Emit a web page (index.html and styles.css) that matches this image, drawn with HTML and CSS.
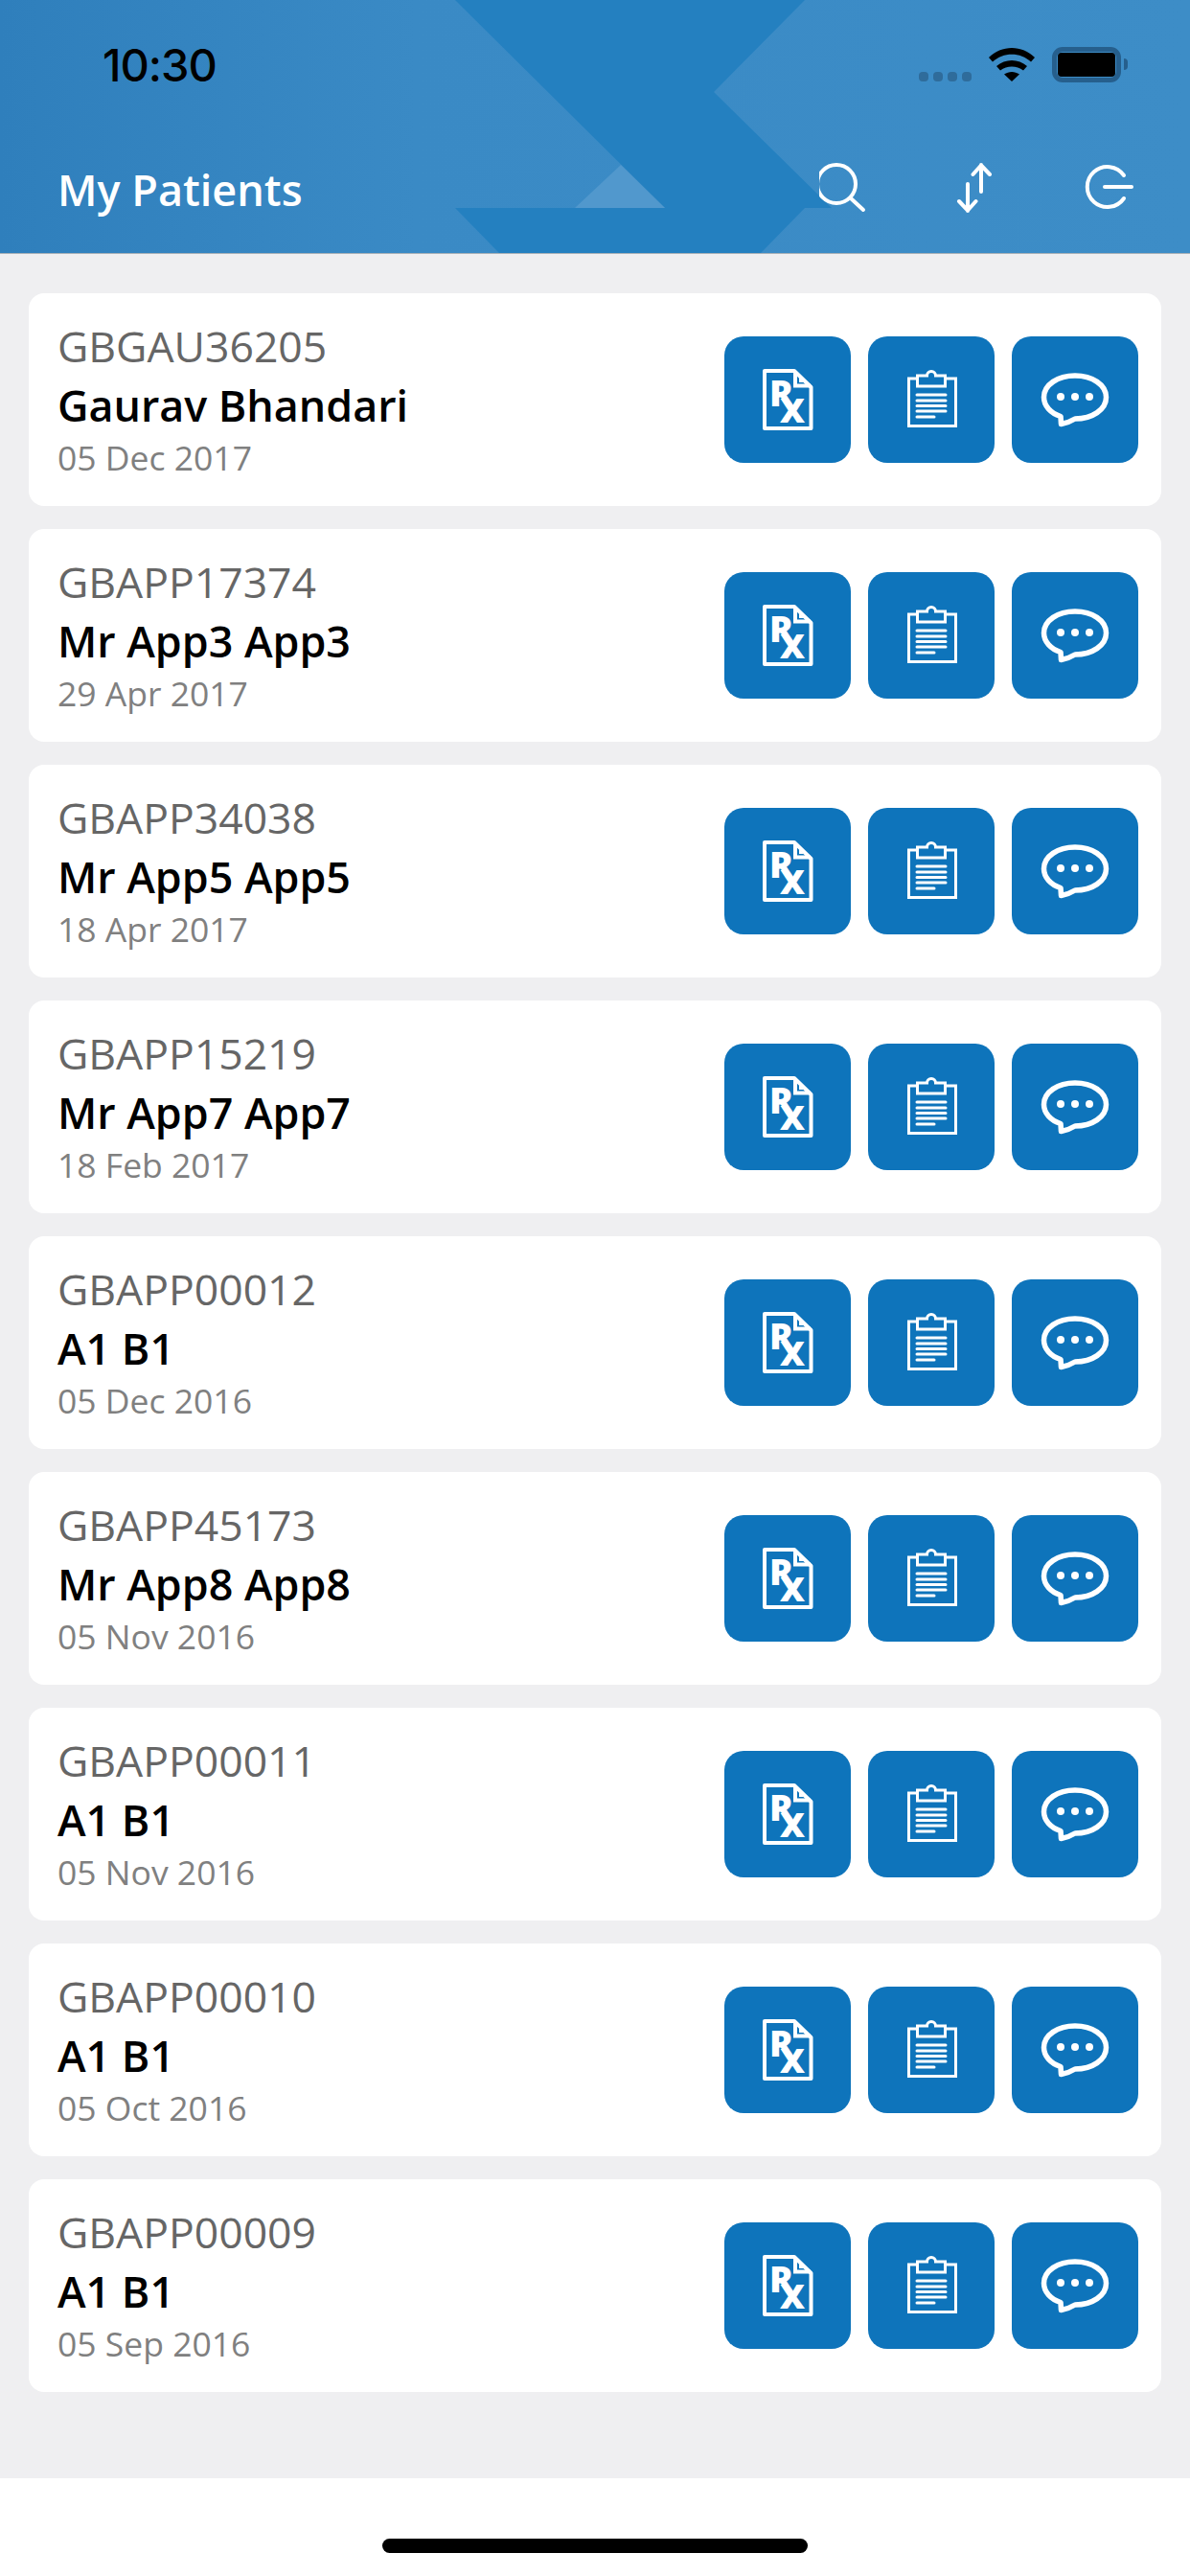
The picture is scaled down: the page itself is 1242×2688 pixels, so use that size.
FILE: index.html
```html
<!DOCTYPE html>
<html lang="en">
<head>
    <meta charset="UTF-8">
    <meta name="viewport" content="width=device-width, initial-scale=1.0">
    <title>My Patients</title>
    <link rel="stylesheet" href="styles.css">
</head>
<body>
    <!-- shared icons for the patient rows -->
    <svg class="icon-defs" width="0" height="0">
        <symbol id="icon-page" viewBox="0 0 132 132">
            <path d="M42 36 H73 L90.5 53 V96 H42 Z" fill="none" stroke="#fff" stroke-width="4" stroke-linejoin="round"/>
            <path d="M74 36 V51.500 H90" fill="none" stroke="#fff" stroke-width="4"/>
            <path d="M78 43 L83 48 H78 Z" fill="#fff"/>
        </symbol>
        <symbol id="icon-notes" viewBox="0 0 132 132">
            <path d="M51 44 H42.500 V93.500 H91.500 V44 H81" fill="none" stroke="#fff" stroke-width="3"/>
            <path d="M51.500 41 H61.500 A4.500 4.500 0 0 1 70.500 41 H80.500 V52 H51.500 Z" fill="none" stroke="#fff" stroke-width="3"/>
            <path d="M51 61 H81 M51 67 H81 M51 72.500 H81 M51 78 H81 M51 84 H69" stroke="#fff" stroke-width="3" stroke-linecap="round"/>
        </symbol>
        <symbol id="icon-chat" viewBox="0 0 132 132">
            <path d="M66 41 C48 41 33.500 50.500 33.500 63.500 C33.500 72.500 40.500 80 51 83.500 L51.500 91.500 C57 90.500 62 88.500 66 86 C84 86 98.500 76.500 98.500 63.500 C98.500 50.500 84 41 66 41 Z" fill="none" stroke="#fff" stroke-width="5.500" stroke-linejoin="round"/>
            <circle cx="51" cy="63" r="4" fill="#fff"/>
            <circle cx="66" cy="63" r="4" fill="#fff"/>
            <circle cx="81" cy="63" r="4" fill="#fff"/>
        </symbol>
    </svg>

    <header class="app-header">
        <svg class="header-art" viewBox="0 0 1242 264" width="1242" height="264">
            <path d="M475 0 H840 L745 96 L868 217 H694 Z" fill="#2480c0"/>
            <path d="M475 217 H840 L794 264 H521 Z" fill="#2480c0"/>
            <path d="M648 172 L694 217 H600 Z" fill="#5198cd"/>
        </svg>

        <div class="status-bar">
            <span class="status-time">10:30</span>
            <div class="status-icons">
                <div class="signal">
                    <span class="signal-dot"></span>
                    <span class="signal-dot"></span>
                    <span class="signal-dot"></span>
                    <span class="signal-dot"></span>
                </div>
                <svg class="wifi" viewBox="0 0 50 36" width="50" height="36">
                    <path d="M1 11 C14 -2.500 36 -2.500 49 11 L45 15.500 C34 5 16 5 5 15.500 Z"/>
                    <path d="M9 20 C18 12 32 12 41 20 L37 24.500 C30 19 20 19 13 24.500 Z"/>
                    <path d="M17 28.500 C22 25 28 25 33 28.500 L25 36 Z"/>
                </svg>
                <div class="battery"><span class="battery-fill"></span></div>
                <span class="battery-cap"></span>
            </div>
        </div>

        <nav class="nav-bar">
            <h1 class="nav-title">My Patients</h1>
            <div class="nav-actions">
                <svg class="nav-icon" viewBox="0 0 60 60">
                    <circle cx="18" cy="27" r="20"/>
                    <path d="M33 42 L46 54"/>
                </svg>
                <svg class="nav-icon" viewBox="0 0 60 60">
                    <path d="M34 7 V35 M25.500 17 L34 7.500 L43 17"/>
                    <path d="M20 27 V55 M11 45 L20 54.500 L28.500 45"/>
                </svg>
                <svg class="nav-icon" viewBox="0 0 60 60">
                    <path d="M48 18 A21 21 0 1 0 48 42"/>
                    <path d="M28 30 H56"/>
                </svg>
            </div>
        </nav>
    </header>

    <main class="patient-list">
        <div class="patient-card">
            <div class="patient-info">
                <div class="patient-id">GBGAU36205</div>
                <div class="patient-name">Gaurav Bhandari</div>
                <div class="patient-date">05 Dec 2017</div>
            </div>
            <div class="patient-actions">
                <a href="#" class="action-btn"><svg viewBox="0 0 132 132"><use href="#icon-page"/><text class="rx-mark" x="47" y="73">R<tspan class="rx-x" x="58" y="90">X</tspan></text></svg></a>
                <a href="#" class="action-btn"><svg><use href="#icon-notes"/></svg></a>
                <a href="#" class="action-btn"><svg><use href="#icon-chat"/></svg></a>
            </div>
        </div>
        <div class="patient-card">
            <div class="patient-info">
                <div class="patient-id">GBAPP17374</div>
                <div class="patient-name">Mr App3 App3</div>
                <div class="patient-date">29 Apr 2017</div>
            </div>
            <div class="patient-actions">
                <a href="#" class="action-btn"><svg viewBox="0 0 132 132"><use href="#icon-page"/><text class="rx-mark" x="47" y="73">R<tspan class="rx-x" x="58" y="90">X</tspan></text></svg></a>
                <a href="#" class="action-btn"><svg><use href="#icon-notes"/></svg></a>
                <a href="#" class="action-btn"><svg><use href="#icon-chat"/></svg></a>
            </div>
        </div>
        <div class="patient-card">
            <div class="patient-info">
                <div class="patient-id">GBAPP34038</div>
                <div class="patient-name">Mr App5 App5</div>
                <div class="patient-date">18 Apr 2017</div>
            </div>
            <div class="patient-actions">
                <a href="#" class="action-btn"><svg viewBox="0 0 132 132"><use href="#icon-page"/><text class="rx-mark" x="47" y="73">R<tspan class="rx-x" x="58" y="90">X</tspan></text></svg></a>
                <a href="#" class="action-btn"><svg><use href="#icon-notes"/></svg></a>
                <a href="#" class="action-btn"><svg><use href="#icon-chat"/></svg></a>
            </div>
        </div>
        <div class="patient-card">
            <div class="patient-info">
                <div class="patient-id">GBAPP15219</div>
                <div class="patient-name">Mr App7 App7</div>
                <div class="patient-date">18 Feb 2017</div>
            </div>
            <div class="patient-actions">
                <a href="#" class="action-btn"><svg viewBox="0 0 132 132"><use href="#icon-page"/><text class="rx-mark" x="47" y="73">R<tspan class="rx-x" x="58" y="90">X</tspan></text></svg></a>
                <a href="#" class="action-btn"><svg><use href="#icon-notes"/></svg></a>
                <a href="#" class="action-btn"><svg><use href="#icon-chat"/></svg></a>
            </div>
        </div>
        <div class="patient-card">
            <div class="patient-info">
                <div class="patient-id">GBAPP00012</div>
                <div class="patient-name">A1 B1</div>
                <div class="patient-date">05 Dec 2016</div>
            </div>
            <div class="patient-actions">
                <a href="#" class="action-btn"><svg viewBox="0 0 132 132"><use href="#icon-page"/><text class="rx-mark" x="47" y="73">R<tspan class="rx-x" x="58" y="90">X</tspan></text></svg></a>
                <a href="#" class="action-btn"><svg><use href="#icon-notes"/></svg></a>
                <a href="#" class="action-btn"><svg><use href="#icon-chat"/></svg></a>
            </div>
        </div>
        <div class="patient-card">
            <div class="patient-info">
                <div class="patient-id">GBAPP45173</div>
                <div class="patient-name">Mr App8 App8</div>
                <div class="patient-date">05 Nov 2016</div>
            </div>
            <div class="patient-actions">
                <a href="#" class="action-btn"><svg viewBox="0 0 132 132"><use href="#icon-page"/><text class="rx-mark" x="47" y="73">R<tspan class="rx-x" x="58" y="90">X</tspan></text></svg></a>
                <a href="#" class="action-btn"><svg><use href="#icon-notes"/></svg></a>
                <a href="#" class="action-btn"><svg><use href="#icon-chat"/></svg></a>
            </div>
        </div>
        <div class="patient-card">
            <div class="patient-info">
                <div class="patient-id">GBAPP00011</div>
                <div class="patient-name">A1 B1</div>
                <div class="patient-date">05 Nov 2016</div>
            </div>
            <div class="patient-actions">
                <a href="#" class="action-btn"><svg viewBox="0 0 132 132"><use href="#icon-page"/><text class="rx-mark" x="47" y="73">R<tspan class="rx-x" x="58" y="90">X</tspan></text></svg></a>
                <a href="#" class="action-btn"><svg><use href="#icon-notes"/></svg></a>
                <a href="#" class="action-btn"><svg><use href="#icon-chat"/></svg></a>
            </div>
        </div>
        <div class="patient-card">
            <div class="patient-info">
                <div class="patient-id">GBAPP00010</div>
                <div class="patient-name">A1 B1</div>
                <div class="patient-date">05 Oct 2016</div>
            </div>
            <div class="patient-actions">
                <a href="#" class="action-btn"><svg viewBox="0 0 132 132"><use href="#icon-page"/><text class="rx-mark" x="47" y="73">R<tspan class="rx-x" x="58" y="90">X</tspan></text></svg></a>
                <a href="#" class="action-btn"><svg><use href="#icon-notes"/></svg></a>
                <a href="#" class="action-btn"><svg><use href="#icon-chat"/></svg></a>
            </div>
        </div>
        <div class="patient-card">
            <div class="patient-info">
                <div class="patient-id">GBAPP00009</div>
                <div class="patient-name">A1 B1</div>
                <div class="patient-date">05 Sep 2016</div>
            </div>
            <div class="patient-actions">
                <a href="#" class="action-btn"><svg viewBox="0 0 132 132"><use href="#icon-page"/><text class="rx-mark" x="47" y="73">R<tspan class="rx-x" x="58" y="90">X</tspan></text></svg></a>
                <a href="#" class="action-btn"><svg><use href="#icon-notes"/></svg></a>
                <a href="#" class="action-btn"><svg><use href="#icon-chat"/></svg></a>
            </div>
        </div>
    </main>

    <footer class="home-area">
        <div class="home-bar"></div>
    </footer>
</body>
</html>
```

FILE: styles.css
```css
:root {
    --header-color: #3d8dc7;
    --button-color: #0e74bb;
    --page-color: #efeff1;
}

* {
    margin: 0;
    padding: 0;
    box-sizing: border-box;
}

body {
    font-family: 'Open Sans', 'Liberation Sans', sans-serif;
    background-color: var(--page-color);
    width: 1242px;
    height: 2688px;
    overflow: hidden;
    display: flex;
    flex-direction: column;
}

.icon-defs {
    position: absolute;
}

.rx-mark {
    font-family: 'Open Sans', sans-serif;
    font-size: 37px;
    font-weight: 800;
    fill: #fff;
}

.rx-x {
    font-size: 36px;
}

/* header */
.app-header {
    position: relative;
    height: 265px;
    flex-shrink: 0;
    background: linear-gradient(90deg, #2f7fbc 0%, #3a8ac5 35%, var(--header-color) 100%);
    border-bottom: 1px solid #a9b1b8;
}

.header-art {
    position: absolute;
    top: 0;
    left: 0;
}

.status-bar {
    position: relative;
    height: 100px;
    padding: 39px 65px 0 107px;
    display: flex;
    justify-content: space-between;
}

.status-time {
    font-family: 'Inter', sans-serif;
    font-size: 47px;
    font-weight: 500;
    line-height: 57px;
    letter-spacing: -1px;
    color: #000;
}

.status-icons {
    display: flex;
    height: 37px;
    margin-top: 10px;
}

.signal {
    display: flex;
    gap: 5px;
    margin-top: 26px;
    margin-right: 17px;
}

.signal-dot {
    width: 10px;
    height: 10px;
    border-radius: 4px;
    background: #2f6c9b;
}

.wifi {
    fill: #000;
    margin-right: 17px;
}

.battery {
    width: 72px;
    height: 37px;
    padding: 1px;
    border: 5px solid #265f8d;
    border-radius: 11px;
}

.battery-fill {
    display: block;
    height: 100%;
    background: #000;
    border-radius: 4px;
}

.battery-cap {
    width: 4px;
    height: 12px;
    margin: 12px 0 0 3px;
    background: #265f8d;
    border-radius: 0 6px 6px 0;
}

.nav-bar {
    position: relative;
    padding: 68px 57px 0 60px;
    display: flex;
    justify-content: space-between;
}

.nav-title {
    font-size: 45px;
    font-weight: 600;
    line-height: 60px;
    color: #fff;
}

.nav-actions {
    display: flex;
    gap: 75px;
    margin-top: -3px;
}

.nav-icon {
    width: 60px;
    height: 60px;
    fill: none;
    stroke: #fff;
    stroke-width: 4;
    stroke-linecap: round;
    stroke-linejoin: round;
}

/* patient rows */
.patient-list {
    flex: 1;
    padding: 41px 30px 0;
    display: flex;
    flex-direction: column;
    gap: 24px;
}

.patient-card {
    height: 222px;
    padding: 0 24px 0 30px;
    background: #fff;
    border-radius: 16px;
    display: flex;
    justify-content: space-between;
    align-items: center;
}

.patient-info {
    margin-top: -1px;
}

.patient-id {
    font-size: 44.500px;
    line-height: 60px;
    margin-bottom: 2px;
    color: #666;
}

.patient-name {
    font-size: 44.800px;
    font-weight: 600;
    line-height: 60px;
    margin-bottom: -2px;
    color: #000;
}

.patient-date {
    font-size: 35.500px;
    line-height: 52px;
    color: #808080;
}

.patient-actions {
    display: flex;
    gap: 18px;
}

.action-btn {
    display: block;
    width: 132px;
    height: 132px;
    background: var(--button-color);
    border-radius: 20px;
}

.action-btn svg {
    display: block;
    width: 132px;
    height: 132px;
}

/* footer */
.home-area {
    height: 102px;
    flex-shrink: 0;
    background: #fff;
    padding-top: 63px;
}

.home-bar {
    width: 444px;
    height: 15px;
    margin: 0 auto;
    background: #000;
    border-radius: 8px;
}
```
